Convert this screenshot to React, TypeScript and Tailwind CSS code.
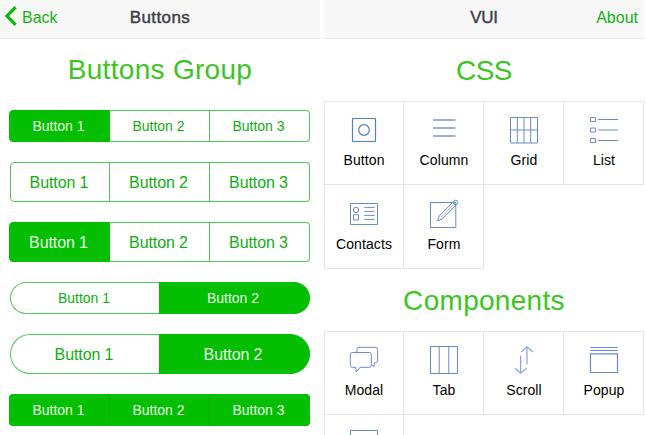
import React from 'react';
import clsx from 'clsx';

type Item = {
  label?: string;
  icon: React.ReactNode;
};

type GroupProps = {
  labels: string[];
  active?: number;
  large?: boolean;
  round?: boolean;
  solid?: boolean;
};

const Icon = ({ children }: { children: React.ReactNode }) => (
  <svg
    width={32}
    height={32}
    viewBox="0 0 32 32"
    fill="none"
    stroke="#688bd0"
    strokeWidth={1}
    className="shrink-0"
  >
    {children}
  </svg>
);

const cssItems: Item[] = [
  {
    label: 'Button',
    icon: (
      <Icon>
        <rect x="4.5" y="4.5" width="23" height="23" rx="0.5" stroke="#4f7fc8" strokeWidth={1.2} />
        <circle cx="16" cy="16" r="5.3" stroke="#4f7fc8" strokeWidth={1.2} />
      </Icon>
    )
  },
  {
    label: 'Column',
    icon: (
      <Icon>
        <path d="M5 6h22.5M5 14h22.5M5 22h22.5" stroke="#7599cc" strokeWidth={1.5} />
      </Icon>
    )
  },
  {
    label: 'Grid',
    icon: (
      <Icon>
        <path d="M2.5 3.5h27v25.5h-27zM9.3 3.5v25.5M16 3.5v25.5M22.7 3.5v25.5M2.5 16h27" />
      </Icon>
    )
  },
  {
    label: 'List',
    icon: (
      <Icon>
        <path d="M2.5 3.5h5v4h-5zM2.5 14h5v4h-5zM2.5 24.5h5v4h-5zM10 5.5h20M10 16h20M10 26.5h20" />
      </Icon>
    )
  },
  {
    label: 'Contacts',
    icon: (
      <Icon>
        <path d="M2.5 5.5h27v21h-27zM5.5 16.7h5v5.2h-5zM16.3 9.4h10.4M16.3 13.4h10.4M16.3 17.4h10.4M16.3 21.4h10.4" />
        <circle cx="8" cy="12" r="2.7" />
      </Icon>
    )
  },
  {
    label: 'Form',
    icon: (
      <Icon>
        <path d="M2.5 4.5h25.3v25H2.5z" />
        <path d="M9.6 22.8l1.6-4.7L24.6 4.4l3 2.9L14.2 21z" />
        <path d="M12.9 19.4L24.8 7.2" strokeWidth={0.6} />
        <circle cx="27.6" cy="4.4" r="2.2" />
      </Icon>
    )
  }
];

const componentItems: Item[] = [
  {
    label: 'Modal',
    icon: (
      <Icon>
        <path d="M9 8.3V5.3a2 2 0 0 1 2-2h16.6a2 2 0 0 1 2 2v11.2a2 2 0 0 1-2 2H26.7l-.7 4.2-2.7-2.6" />
        <path d="M4.3 8.5h17a2 2 0 0 1 2 2v10.8a2 2 0 0 1-2 2H12L8.3 28l-.6-4.7H4.3a2 2 0 0 1-2-2V10.5a2 2 0 0 1 2-2z" />
      </Icon>
    )
  },
  {
    label: 'Tab',
    icon: (
      <Icon>
        <path d="M2.5 2.5h27v27h-27zM11.2 2.5v27M20.8 2.5v27" />
      </Icon>
    )
  },
  {
    label: 'Scroll',
    icon: (
      <Icon>
        <path d="M19 20.5V3M13.2 8L19 2.8 25 8M12.6 11.5v17.7M7 24.2l5.6 5 6-5" stroke="#8ba3dc" strokeWidth={1.2} />
      </Icon>
    )
  },
  {
    label: 'Popup',
    icon: (
      <Icon>
        <path d="M2.3 3.5h27.4M2.3 6.5h27.4M2.5 9.8h27v18.7h-27z" strokeWidth={1.2} />
      </Icon>
    )
  },
  {
    icon: (
      <Icon>
        <path d="M2.5 2.5h27v27h-27z" />
      </Icon>
    )
  }
];

const ButtonGroup = ({ labels, active, large, round, solid }: GroupProps) => (
  <div className={clsx('mr-2.5 flex', solid || active === 0 ? 'ml-[9px]' : 'ml-2.5')}>
    {labels.map((label, index) => {
      const filled = solid || index === active;
      const first = index === 0;
      const last = index === labels.length - 1;
      return (
        <button
          key={label}
          className={clsx(
            'border-y border-r pr-0.5 text-center',
            large ? 'h-10 pt-px text-base tracking-[-0.1px]' : 'h-8 text-sm',
            first && 'grow border-l',
            first && (round ? 'rounded-l-full' : 'rounded-l'),
            last && (round ? 'rounded-r-full' : 'rounded-r'),
            round ? (first ? 'w-[149px] border-r-0' : 'w-[151px]') : !first && 'w-[100px]',
            filled ? 'border-[#04be02] bg-[#04be02] text-[#e6fae6]' : 'border-[#55c455] text-[#0fae0f]',
            solid && !last && 'border-r-[#03ab02]'
          )}
        >
          {label}
        </button>
      );
    })}
  </div>
);

const Title = ({ className, children }: { className?: string; children: React.ReactNode }) => (
  <h2 className={clsx('h-10 text-center text-[28px] leading-10 text-[#3cc51f]', className)}>{children}</h2>
);

const ItemGrid = ({ items }: { items: Item[] }) => (
  <div className="grid grid-cols-4">
    {items.map((item, index) => (
      <div
        key={index}
        className={clsx(
          'flex h-[84px] flex-col items-center border-t border-r border-b border-[#e5e5e5] pt-3',
          index % 4 === 0 ? 'border-l' : 'pl-px',
          index >= 4 && 'border-t-transparent'
        )}
      >
        {item.icon}
        {item.label && <span className="mt-1 text-sm leading-5 tracking-[0.1px] text-black">{item.label}</span>}
      </div>
    ))}
  </div>
);

const three = ['Button 1', 'Button 2', 'Button 3'];
const two = ['Button 1', 'Button 2'];

const App = () => {
  return (
    <div className="flex h-[435px] w-[646px] gap-1 overflow-hidden bg-white font-['Liberation_Sans',Arial,sans-serif]">
      <div className="w-80 shrink-0">
        <header className="grid h-[39px] grid-cols-3 border-b border-[#e7e7e7] bg-[#f7f7f8] pt-2 leading-5">
          <div className="flex text-base leading-5 text-[#14b012]">
            <svg width={14} height={20} viewBox="0 0 14 20" fill="none" stroke="#09b807" strokeWidth={3.2} className="-mt-0.5 ml-1 mr-1 shrink-0">
              <path d="M11.6 1.2L3 10l8.6 8.8" />
            </svg>
            Back
          </div>
          <h1 className="text-center text-[17px] tracking-[0.4px] text-[#3d3d42] [-webkit-text-stroke:0.4px]">Buttons</h1>
        </header>
        <div className="pt-[11px]">
          <Title className="tracking-[0.3px]">Buttons Group</Title>
          <div className="flex flex-col gap-5 pt-5">
            <ButtonGroup labels={three} active={0} />
            <ButtonGroup labels={three} large />
            <ButtonGroup labels={three} active={0} large />
            <ButtonGroup labels={two} active={1} round />
            <ButtonGroup labels={two} active={1} large round />
            <ButtonGroup labels={three} solid />
          </div>
        </div>
      </div>

      <div className="w-80 shrink-0">
        <header className="grid h-[39px] grid-cols-3 border-b border-[#e7e7e7] bg-[#f7f7f8] pt-2 leading-5">
          <h1 className="col-start-2 text-center text-[17px] tracking-[-0.3px] text-[#3d3d42] [-webkit-text-stroke:0.4px]">VUI</h1>
          <div className="pr-1.5 text-right text-base leading-5 text-[#14b012]">About</div>
        </header>
        <div className="pt-3">
          <Title className="tracking-[-0.5px]">CSS</Title>
          <div className="pt-2.5">
            <ItemGrid items={cssItems} />
          </div>
        </div>
        <div className="pt-3">
          <Title className="tracking-[0.3px]">Components</Title>
          <div className="pt-2.5">
            <ItemGrid items={componentItems} />
          </div>
        </div>
      </div>
    </div>
  );
};

export default App;
